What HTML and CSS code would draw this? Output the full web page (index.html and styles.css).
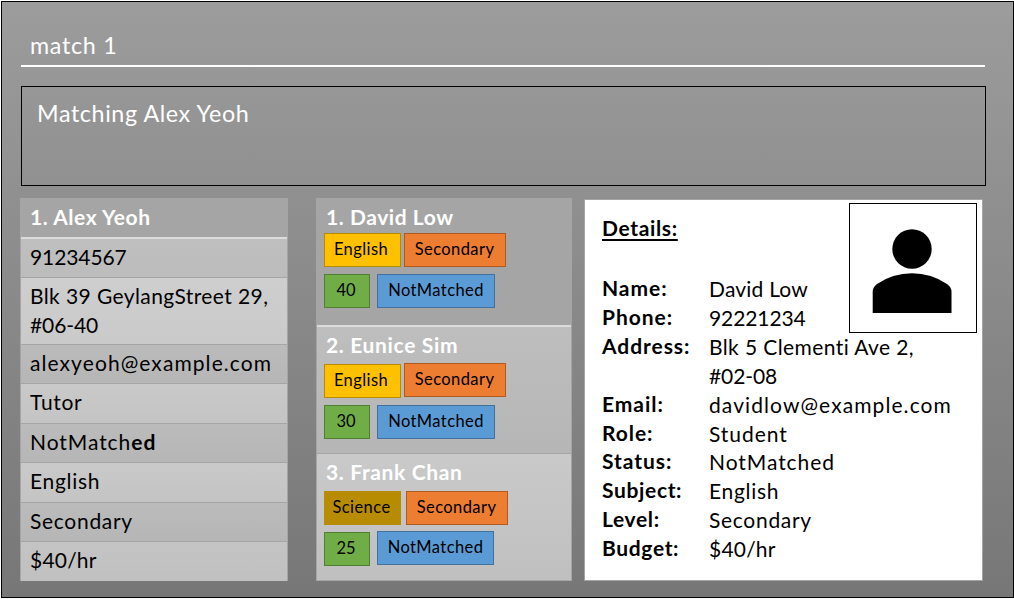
FILE: index.html
```html
<!DOCTYPE html>
<html lang="en">
<head>
<meta charset="utf-8">
<title>Matching Alex Yeoh</title>
<link rel="stylesheet" href="styles.css">
</head>
<body>
<main class="window">
  <div class="command">match 1</div>
  <div class="result">Matching Alex Yeoh</div>
  <div class="panels">
    <section class="profile">
      <h2 class="profile-name">1. Alex Yeoh</h2>
      <div class="field dark phone numeric">91234567</div>
      <div class="field address mixed">Blk 39 GeylangStreet 29,<br><span class="numeric">#06-40</span></div>
      <div class="field dark mail">alexyeoh@example.com</div>
      <div class="field">Tutor</div>
      <div class="field dark wide">NotMatch<b>ed</b></div>
      <div class="field">English</div>
      <div class="field dark">Secondary</div>
      <div class="field last price">$40/hr</div>
    </section>
    <section class="matches">
      <article class="match first">
        <h2>1. David Low</h2>
        <div class="chips"><span class="chip subject">English</span><span class="chip level">Secondary</span></div>
        <div class="chips second"><span class="chip rate">40</span><span class="chip status">NotMatched</span></div>
      </article>
      <article class="match middle">
        <h2>2. Eunice Sim</h2>
        <div class="chips"><span class="chip subject low">English</span><span class="chip level">Secondary</span></div>
        <div class="chips second"><span class="chip rate">30</span><span class="chip status">NotMatched</span></div>
      </article>
      <article class="match final">
        <h2>3. Frank Chan</h2>
        <div class="chips"><span class="chip subject science">Science</span><span class="chip level">Secondary</span></div>
        <div class="chips second"><span class="chip rate low">25</span><span class="chip status">NotMatched</span></div>
      </article>
    </section>
    <section class="details">
      <h2 class="details-title"><span>Details:</span></h2>
      <dl class="details-list">
        <dt>Name:</dt><dd class="price">David Low</dd>
        <dt>Phone:</dt><dd class="numeric">92221234</dd>
        <dt>Address:</dt><dd class="mixed">Blk 5 Clementi Ave 2,<br><span class="numeric">#02-08</span></dd>
        <dt>Email:</dt><dd class="mail">davidlow@example.com</dd>
        <dt>Role:</dt><dd class="wide">Student</dd>
        <dt>Status:</dt><dd class="wide">NotMatched</dd>
        <dt class="tight">Subject:</dt><dd>English</dd>
        <dt class="tight">Level:</dt><dd>Secondary</dd>
        <dt class="tight">Budget:</dt><dd class="price">$40/hr</dd>
      </dl>
      <div class="avatar">
        <svg width="126" height="128" viewBox="850 204 126 128"><circle cx="912" cy="249" r="19.7"/><path d="M872.7 313V292Q872.7 287 877 284Q893 273.3 912 273.3Q931 273.3 947 284Q951.5 287 951.5 292V313Z"/></svg>
      </div>
    </section>
  </div>
</main>
</body>
</html>
```

FILE: styles.css
```css
* { box-sizing: border-box; }
body { margin: 0; padding: 1px 0 1px 1px; background: #fff; font-family: Lato, sans-serif; font-size: 21px; line-height: 29px; letter-spacing: .7px; color: #000; }
h2, dl, dd { margin: 0; font-size: inherit; }
.numeric { letter-spacing: -.1px; }
.price { letter-spacing: .2px; }
.mixed { letter-spacing: .4px; }
.mail { letter-spacing: 1.08px; }
.wide { letter-spacing: .95px; }
.window { height: 597px; border: 1px solid #000; padding: 28px 27px 16px 18px; background: linear-gradient(#9c9c9c, #777); }
.command { height: 37px; margin: 0 1px; padding: 1px 9px 0; border-bottom: 2px solid #fff; color: #fff; font-size: 23.3px; }
.result { height: 100px; margin: 19px 0 12px 1px; padding: 12px 15px; border: 1px solid #000; color: #fff; font-size: 23.3px; letter-spacing: .6px; }
.panels { display: flex; height: 383px; }
.profile { width: 268px; margin-right: 28px; border: 1px solid #a5a5a5; background: #a5a5a5; white-space: nowrap; }
.profile-name { height: 40px; padding: 3px 9px; color: #fff; border-bottom: 2px solid #dcdcdc; letter-spacing: .55px; }
.field { height: 39.4px; padding: 3px 9px; border-bottom: 1px solid #a5a5a5; background: linear-gradient(#c9c9c9, #c4c4c4); }
.field.dark { background: linear-gradient(#bbb, #b6b6b6); }
.field.phone { height: 39px; background: linear-gradient(#bfbfbf, #bcbcbc); }
.field.address { height: 67px; background: linear-gradient(#cecece, #cacaca); }
.field.last { height: 39px; border-bottom: 0; background: linear-gradient(#c4c4c4, #c0c0c0); }
.matches { width: 256px; margin-right: 12px; border: 1px solid #a5a5a5; background: #a5a5a5; }
.match { padding: 3px 7px 0; }
.match h2 { height: 30px; padding-left: 2px; color: #fff; letter-spacing: .65px; }
.match.first { height: 128px; border-bottom: 2px solid #dcdcdc; }
.match.first h2 { height: 31px; letter-spacing: .55px; }
.match.middle { height: 127px; border-bottom: 1px solid #a5a5a5; background: linear-gradient(#bebebe, #b6b6b6); }
.match.final { height: 126px; background: linear-gradient(#c9c9c9, #c0c0c0); }
.chips { display: flex; gap: 3px; height: 34px; font-size: 16.5px; line-height: 31px; text-align: center; letter-spacing: .42px; }
.middle .chips { margin-top: 3px; }
.final .chips { margin-top: 4px; gap: 5px; }
.chips.second { margin-top: 7px; gap: 7px; }
.middle .chips.second { margin-top: 8px; }
.final .chips.second { margin-top: 6px; }
.chip { height: 34px; border: 1px solid; }
.chip.low { margin-top: 1px; }
.subject { width: 77px; background: #ffc000; border-color: #b88c00; padding-right: 3px; }
.science { background: #b88c00; padding-right: 2px; }
.level { width: 102px; background: #ed7d31; border-color: #ae5a21; padding-right: 1px; }
.rate { width: 46px; background: #70ad47; border-color: #507e32; padding-right: 2px; letter-spacing: 0; }
.status { width: 118px; background: #5b9bd5; border-color: #41719c; }
.final .status { width: 117px; }
.details { position: relative; width: 399px; margin-top: 1px; padding: 13px 17px; border: 1px solid #a5a5a5; background: #fff; }
.details-title { height: 61px; letter-spacing: .65px; }
.details-title span { text-decoration: underline; text-decoration-thickness: 2px; text-underline-offset: 3px; }
.details-list { display: grid; grid-template-columns: 107px 1fr; line-height: 28.9px; }
.details-list dt { font-weight: 700; letter-spacing: .95px; }
.details-list .tight { letter-spacing: .65px; }
.details-list dd { padding-top: 1px; margin-bottom: -1px; }
.avatar { position: absolute; top: 3px; right: 5px; width: 128px; height: 130px; border: 1px solid #000; background: #fff; }
.avatar svg { display: block; }
```
